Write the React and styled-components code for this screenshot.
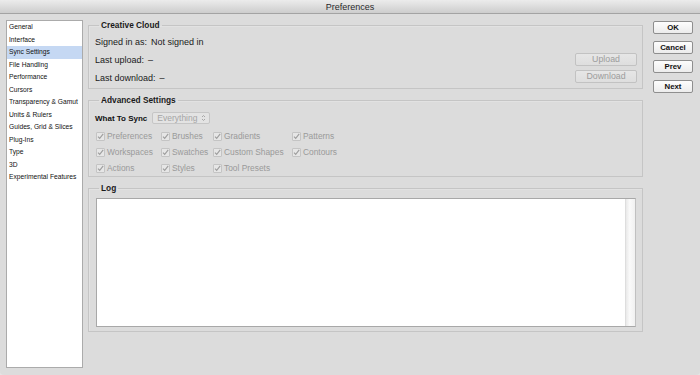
import React from "react";
import styled, { createGlobalStyle } from "styled-components";

const Global = createGlobalStyle`
  html, body { margin: 0; padding: 0; background: #e4e4e4; }
  body { font-family: "Liberation Sans", Arial, sans-serif; color: #111; }
  * { box-sizing: border-box; }
`;

const Window = styled.div`
  width: 700px;
  height: 375px;
  display: flex;
  flex-direction: column;
  background: #dcdcdc;
  border-radius: 0 0 4px 4px;
  overflow: hidden;
`;

const TitleBar = styled.div`
  height: 14px;
  flex: none;
  display: flex;
  align-items: center;
  justify-content: center;
  font-size: 9px;
  color: #2a2a2a;
  background: linear-gradient(#ececec, #cdcdcd);
  border-bottom: 1px solid #a3a3a3;
`;

const Body = styled.div`
  flex: 1;
  display: flex;
  align-items: flex-start;
  padding: 6px 7px 7px 6px;
`;

const Sidebar = styled.ul`
  align-self: stretch;
  width: 77px;
  flex: none;
  margin: 0;
  padding: 0;
  list-style: none;
  background: #fff;
  border: 1px solid #ababab;
`;

const NavItem = styled.li`
  height: 12.5px;
  line-height: 11px;
  padding: 0 0 1.5px 2px;
  font-size: 6.7px;
  color: #111;
  white-space: nowrap;
  background: ${(p) => (p.$active ? "#c5d8f3" : "transparent")};
`;

const Main = styled.div`
  width: 555px;
  flex: none;
  margin-left: 5px;
  display: flex;
  flex-direction: column;
  gap: 6px;
`;

const Group = styled.fieldset`
  margin: 0;
  padding: ${(p) => p.$pad || "0"};
  min-width: 0;
  border: 1px solid #c5c5c5;
  box-shadow: inset 1px 1px 0 #e2e2e2;
`;

const Legend = styled.legend`
  margin-left: 10px;
  padding: 0 2px;
  height: 10px;
  line-height: 10px;
  font-size: 8.3px;
  font-weight: bold;
  color: #1a1a1a;
`;

const CloudBody = styled.div`
  display: flex;
  justify-content: space-between;
  padding: 3px 5px 1px 6px;
`;

const InfoList = styled.div`
  display: flex;
  flex-direction: column;
`;

const InfoRow = styled.div`
  height: 18px;
  display: flex;
  align-items: center;
  gap: 4px;
  font-size: 9px;
  color: #1a1a1a;
`;

const SyncButtons = styled.div`
  display: flex;
  flex-direction: column;
  justify-content: flex-end;
  gap: 4px;
  padding-bottom: 4px;
`;

const SyncButton = styled.button`
  width: 62px;
  height: 13px;
  padding: 0;
  font-family: inherit;
  font-size: 8.8px;
  line-height: 11px;
  color: #9c9c9c;
  background: linear-gradient(#e6e6e6, #dedede);
  border: 1px solid #c2c2c2;
  border-radius: 2px;
`;

const WhatRow = styled.div`
  display: flex;
  align-items: center;
  height: 14px;
  margin: 6px 0 0 6px;
  gap: 5px;
`;

const WhatLabel = styled.span`
  font-size: 8px;
  font-weight: bold;
  color: #111;
`;

const Select = styled.div`
  width: 58px;
  height: 12px;
  display: flex;
  align-items: center;
  justify-content: space-between;
  padding: 0 3px 0 4px;
  font-size: 8.5px;
  color: #a5a5a5;
  background: #e3e3e3;
  border: 1px solid #c6c6c6;
  border-radius: 2px;
`;

const CheckGrid = styled.div`
  display: grid;
  grid-template-columns: 65px 52px 79px auto;
  grid-auto-rows: 16px;
  margin: 3px 0 0 7px;
`;

const CheckItem = styled.label`
  display: flex;
  align-items: center;
  gap: 2px;
  font-size: 8.4px;
  color: #9a9a9a;
  white-space: nowrap;
`;

const Box = styled.span`
  width: 9px;
  height: 9px;
  flex: none;
  display: flex;
  align-items: center;
  justify-content: center;
  background: #e6e6e6;
  border: 1px solid #c4c4c4;
  border-radius: 1px;
`;

const LogArea = styled.div`
  margin: 5px 6px 4px 7px;
  height: 129px;
  display: flex;
  background: #fff;
  border: 1px solid #a8a8a8;
  border-right-color: #c0c0c0;
`;

const LogText = styled.div`
  flex: 1;
`;

const ScrollTrack = styled.div`
  width: 10px;
  flex: none;
  background: linear-gradient(90deg, #e9e9e9, #fafafa 40%, #f0f0f0);
  border-left: 1px solid #dedede;
`;

const Actions = styled.div`
  width: 40px;
  flex: none;
  margin: 1px 0 0 10px;
  display: flex;
  flex-direction: column;
  gap: 6.5px;
`;

const ActionButton = styled.button`
  height: 13px;
  padding: 0;
  font-family: inherit;
  font-size: 7.8px;
  font-weight: bold;
  line-height: 11px;
  color: #111;
  background: linear-gradient(#fdfdfd, #ececec);
  border: 1px solid #8e8e8e;
  border-radius: 2px;
`;

const navItems = [
  "General",
  "Interface",
  "Sync Settings",
  "File Handling",
  "Performance",
  "Cursors",
  "Transparency & Gamut",
  "Units & Rulers",
  "Guides, Grid & Slices",
  "Plug-Ins",
  "Type",
  "3D",
  "Experimental Features",
];

const checks = [
  "Preferences", "Brushes", "Gradients", "Patterns",
  "Workspaces", "Swatches", "Custom Shapes", "Contours",
  "Actions", "Styles", "Tool Presets", null,
];

const Check = () => (
  <svg width="7" height="7" viewBox="0 0 7 7">
    <path d="M1 3.6 L2.7 5.4 L6.2 0.8" fill="none" stroke="#9d9d9d" strokeWidth="1.1" />
  </svg>
);

const Arrows = () => (
  <svg width="5" height="8" viewBox="0 0 5 8">
    <path d="M1 3 L2.5 1.5 L4 3 M1 5 L2.5 6.5 L4 5" fill="none" stroke="#a0a0a0" strokeWidth="0.9" />
  </svg>
);

export default function App() {
  return (
    <>
      <Global />
      <Window>
        <TitleBar>Preferences</TitleBar>
        <Body>
          <Sidebar>
            {navItems.map((n) => (
              <NavItem key={n} $active={n === "Sync Settings"}>{n}</NavItem>
            ))}
          </Sidebar>
          <Main>
            <Group>
              <Legend>Creative Cloud</Legend>
              <CloudBody>
                <InfoList>
                  <InfoRow><span>Signed in as:</span><span>Not signed in</span></InfoRow>
                  <InfoRow><span>Last upload:</span><span>–</span></InfoRow>
                  <InfoRow><span>Last download:</span><span>–</span></InfoRow>
                </InfoList>
                <SyncButtons>
                  <SyncButton disabled>Upload</SyncButton>
                  <SyncButton disabled>Download</SyncButton>
                </SyncButtons>
              </CloudBody>
            </Group>
            <Group>
              <Legend>Advanced Settings</Legend>
              <WhatRow>
                <WhatLabel>What To Sync</WhatLabel>
                <Select><span>Everything</span><Arrows /></Select>
              </WhatRow>
              <CheckGrid>
                {checks.map((c, i) =>
                  c ? (
                    <CheckItem key={c}><Box><Check /></Box>{c}</CheckItem>
                  ) : (
                    <span key={i} />
                  )
                )}
              </CheckGrid>
            </Group>
            <Group>
              <Legend>Log</Legend>
              <LogArea>
                <LogText />
                <ScrollTrack />
              </LogArea>
            </Group>
          </Main>
          <Actions>
            <ActionButton>OK</ActionButton>
            <ActionButton>Cancel</ActionButton>
            <ActionButton>Prev</ActionButton>
            <ActionButton>Next</ActionButton>
          </Actions>
        </Body>
      </Window>
    </>
  );
}
